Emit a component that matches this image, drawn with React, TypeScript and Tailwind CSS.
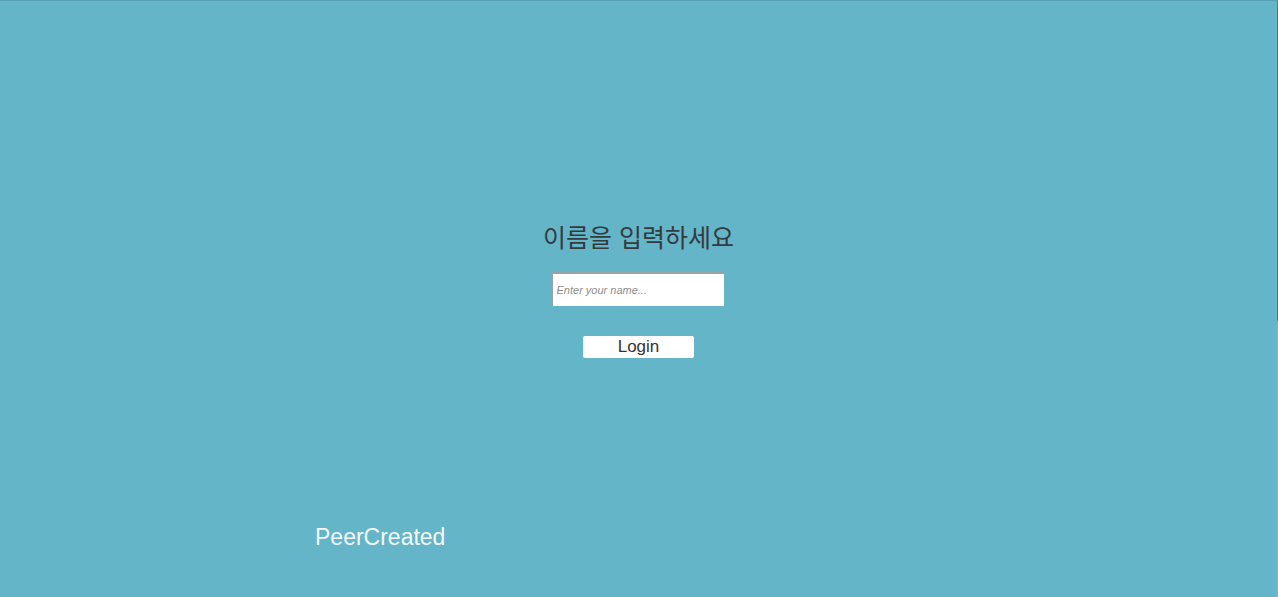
import { useState } from 'react';

export default function App() {
  const [name, setName] = useState('');

  return (
    <div className="flex h-[597px] w-full bg-[#65b5c9] border-t border-[#5a9fb3]" style={{ fontFamily: '"Liberation Sans", "Noto Sans CJK KR", sans-serif' }}>
      <div className="flex flex-1 flex-col">
        <div className="flex flex-col items-center pt-[223px]">
          <h1 className="text-[25px] leading-[28px] text-[#333b3e]">이름을 입력하세요</h1>
          <input
            type="text"
            value={name}
            onChange={(e) => setName(e.target.value)}
            placeholder="Enter your name..."
            className="mt-[20px] h-[34px] w-[172px] -translate-x-px border-t-2 border-l border-[#9aa2a6] bg-white px-[4px] text-[11px] italic text-[#333] placeholder:text-[#8c8c8c] outline-none"
          />
          <button className="mt-[30px] h-[22px] w-[111px] rounded-[2px] bg-white text-[17px] leading-[22px] text-[#333]">
            Login
          </button>
        </div>
        <div className="mt-[166px] pl-[315px] text-[23px] leading-[26px] text-[#f4f8f9]">PeerCreated</div>
      </div>
      <div className="flex w-px flex-col">
        <div className="h-[320px] bg-[#3f7f92]" />
        <div className="flex-1 bg-[#7fb7c6]" />
      </div>
    </div>
  );
}
